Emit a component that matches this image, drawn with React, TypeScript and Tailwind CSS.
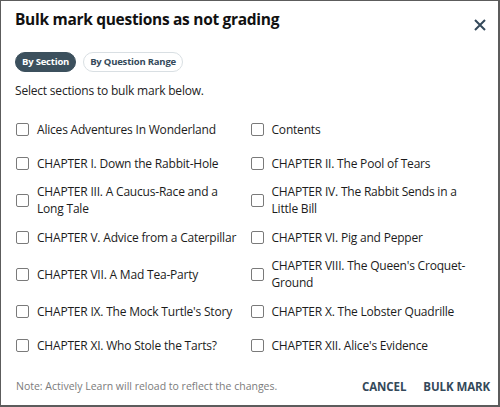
import React, { useState } from 'react';

const sections = [
  'Alices Adventures In Wonderland',
  'Contents',
  'CHAPTER I. Down the Rabbit-Hole',
  'CHAPTER II. The Pool of Tears',
  'CHAPTER III. A Caucus-Race and a Long Tale',
  'CHAPTER IV. The Rabbit Sends in a Little Bill',
  'CHAPTER V. Advice from a Caterpillar',
  'CHAPTER VI. Pig and Pepper',
  'CHAPTER VII. A Mad Tea-Party',
  "CHAPTER VIII. The Queen's Croquet-Ground",
  "CHAPTER IX. The Mock Turtle's Story",
  'CHAPTER X. The Lobster Quadrille',
  'CHAPTER XI. Who Stole the Tarts?',
  "CHAPTER XII. Alice's Evidence",
];

const App: React.FC = () => {
  const [mode, setMode] = useState<'section' | 'range'>('section');
  const [checked, setChecked] = useState<Record<number, boolean>>({});

  const toggle = (i: number) => setChecked({ ...checked, [i]: !checked[i] });

  return (
    <div
      className="w-[500px] h-[407px] bg-white border-l border-t border-r-2 border-b-2 border-[#5c5c5c] flex flex-col text-[#1f1f1f]"
      style={{ fontFamily: '"Open Sans", "Liberation Sans", sans-serif' }}
    >
      <div className="flex items-start justify-between pl-[14px] pr-[12px] pt-[7px]">
        <h2 className="text-[15.5px] font-bold leading-[22px] tracking-[-0.3px] text-[#111]">
          Bulk mark questions as not grading
        </h2>
        <button className="mt-[11px] text-[#34495a]" aria-label="Close">
          <svg width="12" height="12" viewBox="0 0 12 12" fill="none">
            <path d="M1 1L11 11M11 1L1 11" stroke="currentColor" strokeWidth="2" />
          </svg>
        </button>
      </div>

      <div className="flex gap-[7px] px-[14px] mt-[21px]">
        <button
          onClick={() => setMode('section')}
          className={
            mode === 'section'
              ? 'h-[20px] px-[6px] rounded-full text-[9.5px] tracking-[-0.2px] font-bold bg-[#3c505d] text-white border border-[#3c505d]'
              : 'h-[20px] px-[6px] rounded-full text-[9.5px] tracking-[-0.2px] font-bold bg-white text-[#34495a] border border-[#d9dfe3]'
          }
        >
          By Section
        </button>
        <button
          onClick={() => setMode('range')}
          className={
            mode === 'range'
              ? 'h-[20px] px-[6px] rounded-full text-[9.5px] tracking-[-0.2px] font-bold bg-[#3c505d] text-white border border-[#3c505d]'
              : 'h-[20px] px-[6px] rounded-full text-[9.5px] tracking-[-0.2px] font-bold bg-white text-[#34495a] border border-[#d9dfe3]'
          }
        >
          By Question Range
        </button>
      </div>

      <p className="px-[14px] mt-[10px] text-[12px] tracking-[-0.2px] leading-[17px] text-[#222]">
        Select sections to bulk mark below.
      </p>

      <div className="grid grid-cols-2 gap-y-[6px] px-[14px] mt-[16px]">
        {sections.map((s, i) => (
          <label key={s} className="flex items-center gap-[8px] min-h-[28px] cursor-pointer pr-[12px]">
            <span
              onClick={() => toggle(i)}
              className={
                checked[i]
                  ? 'shrink-0 w-[13px] h-[13px] ml-[1px] rounded-[2px] border-[1.5px] border-[#3c505d] bg-[#3c505d]'
                  : 'shrink-0 w-[13px] h-[13px] ml-[1px] rounded-[2px] border-[1.5px] border-[#7a7a7a] bg-white'
              }
            />
            <span className="text-[12px] tracking-[-0.2px] leading-[17px] text-[#1c1c1c]">{s}</span>
          </label>
        ))}
      </div>

      <div className="mt-auto flex items-center justify-between pl-[15px] pr-[8px] pb-[10px]">
        <span className="text-[10.5px] text-[#7b7b7b]">Note: Actively Learn will reload to reflect the changes.</span>
        <div className="flex gap-[17px] text-[11.5px] tracking-[-0.1px] font-bold text-[#34495a]">
          <button>CANCEL</button>
          <button>BULK MARK</button>
        </div>
      </div>
    </div>
  );
};

export default App;
